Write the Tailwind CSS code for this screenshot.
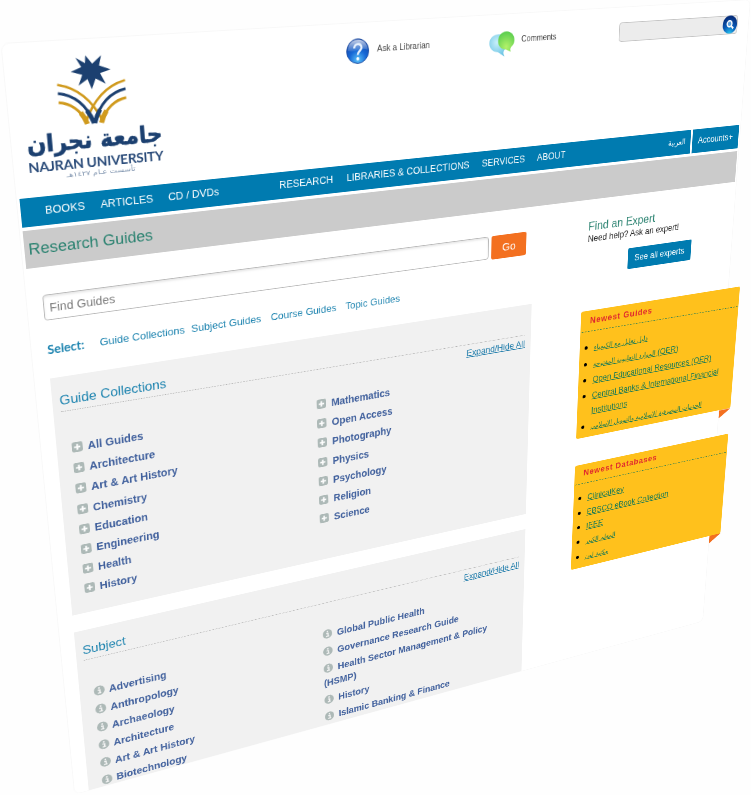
<!DOCTYPE html>
<html lang="en">
<head>
<meta charset="utf-8">
<title>Research Guides - Najran University</title>
<script src="https://cdn.jsdelivr.net/npm/@tailwindcss/browser@4"></script>
</head>
<body class="bg-[#fefefe] font-['Liberation_Sans',Arial,sans-serif]">
<svg class="hidden">
  <defs>
    <symbol id="plus" viewBox="0 0 14 14"><rect width="14" height="14" rx="2.6" fill="#adb9b7"/><path d="M7 3v8M3 7h8" stroke="#fff" stroke-width="2.3"/></symbol>
    <symbol id="info" viewBox="0 0 14 14"><circle cx="7" cy="7" r="7" fill="#adb9b7"/><path d="M5 6.300h2.800v4.300M4.800 10.700h4.600" stroke="#f4f4f4" stroke-width="1.800" fill="none"/><rect x="5.800" y="2.300" width="2.300" height="2.200" fill="#f4f4f4"/></symbol>
  </defs>
</svg>
<div class="w-[751px] h-[795px] overflow-hidden">
<div class="w-[1000px] h-[960px] bg-white rounded-[8px] outline outline-1 outline-[#f8f8f8] origin-top-left [clip-path:inset(-1px_-40px_-1px_-1px)] [transform:matrix3d(0.94881,-0.044,0,0.00026708,0.093206,0.957448,0,0.00022192,0,0,1,0,1.5,44,0,1)] whitespace-nowrap">
 <div class="h-[960px] [clip-path:inset(0_-40px_0_0)]">
  <header class="flex h-[170px] items-start text-[10.7px] leading-[16px] text-[#444]">
    <svg class="w-[200px] h-[170px] shrink-0" viewBox="0 0 200 170">
      <path fill="#1c4070" d="M89 17.500L96 27L106.500 18.500L103.500 29.500L116 34.500L104 38L109.500 50L98.500 43.500L93.500 55L89.500 43.500L79 50L84 38.500L71.500 34.500L83.500 30L78 19.500L88 26Z"/>
      <g fill="none" stroke-linecap="butt">
        <path stroke="#d09a1d" stroke-width="2.800" d="M55.500 47.500C76 52 92 65 103 91M55.500 67C70 69 79 78 85 91M131.500 47.500C111 52 95 65 84 91M131.500 67C117 69 108 78 102 91"/>
        <path stroke="#d09a1d" stroke-width="5.500" d="M79 80C82 84 84 88 85.500 93M108 80C105 84 103 88 101.500 93"/>
        <path stroke="#1c4070" stroke-width="3" d="M55.500 57C74 60 86 72 93 92M131.500 57C113 60 101 72 94 92"/>
        <path stroke="#1c4070" stroke-width="4.800" d="M86 78C89.500 83 91.500 87 93 93M101 78C97.500 83 95.500 87 94 93"/>
      </g>
      <text x="93.500" y="120.500" text-anchor="middle" direction="rtl" textLength="154" lengthAdjust="spacingAndGlyphs" font-family="DejaVu Sans" font-weight="700" font-size="27" fill="#1c4070" stroke="#1c4070" stroke-width=".6">جامعة نجران</text>
      <text x="16" y="142" textLength="154.500" lengthAdjust="spacing" font-family="Lato, sans-serif" font-weight="700" font-size="15.800" fill="#2b4c7a">NAJRAN UNIVERSITY</text>
      <text x="97" y="151" text-anchor="middle" direction="rtl" textLength="79" lengthAdjust="spacingAndGlyphs" font-family="DejaVu Sans" font-size="7.500" fill="#7d92ad">تأسست عـام ١٤٢٧هـ</text>
    </svg>
    <svg class="w-[30px] h-[30px] mt-[18px] ml-[202px] shrink-0" viewBox="0 0 30 30">
      <defs><radialGradient id="ball" cx=".5" cy=".85" r=".85"><stop offset="0" stop-color="#58c0f8"/><stop offset=".45" stop-color="#1668d6"/><stop offset="1" stop-color="#123fa0"/></radialGradient><linearGradient id="shine" x1="0" y1="0" x2="0" y2="1"><stop offset="0" stop-color="#fff" stop-opacity=".75"/><stop offset="1" stop-color="#fff" stop-opacity=".1"/></linearGradient></defs>
      <circle cx="15" cy="15" r="14.500" fill="url(#ball)" stroke="#2754a5"/>
      <path fill="url(#shine)" d="M2 14C2 6 8 1.500 15 1.500S28 6 28 14C20 10 12 17 2 14Z"/>
      <path d="M10.500 11.500C10.500 5 20 5 20 11C20 15 15 14.500 15 19.500" fill="none" stroke="#e6f0fd" stroke-width="2.800"/><circle cx="15" cy="24" r="1.900" fill="#fff"/>
    </svg>
    <span class="mt-[22.500px] ml-[10.500px] w-[154px]">Ask a Librarian</span>
    <svg class="w-[36px] h-[32px] mt-[20.500px] shrink-0" viewBox="0 0 36 32">
      <defs><radialGradient id="gr" cx=".5" cy=".75" r=".7"><stop offset="0" stop-color="#b4f26a"/><stop offset="1" stop-color="#5fcf50"/></radialGradient><radialGradient id="bl" cx=".4" cy=".35" r=".75"><stop offset="0" stop-color="#c9f0fb"/><stop offset="1" stop-color="#5dbde0"/></radialGradient></defs>
      <path fill="url(#bl)" d="M13 3C5 3 0 7.500 0 13.500C0 19.500 5 24.500 12 25C15 26 18 29 22 31C20 28 20 26 21 23.500C25 21 27 18 27 14C27 8 21 3 13 3Z"/>
      <path fill="url(#gr)" d="M24 0C17 0 12.500 5 12.500 11.500C12.500 17.500 17 21.500 22 22C25 22.500 28 24 31 25.500C30 23.500 30 22 31 20C34 18 36 15 36 11.500C36 5 31 0 24 0Z"/>
    </svg>
    <span class="mt-[22.500px] ml-[10.500px] w-[147px]">Comments</span>
    <div class="mt-[19px] w-[192px] h-[25px] rounded-[4px] border border-[#c4c4c4] bg-[#ececec] flex justify-end items-center">
      <svg class="w-[24px] h-[24px] relative -top-px" viewBox="0 0 24 24"><defs><radialGradient id="sb" cx=".5" cy="1" r=".9"><stop offset="0" stop-color="#25c4f0"/><stop offset=".5" stop-color="#0a5cb8"/><stop offset="1" stop-color="#062e7c"/></radialGradient></defs><circle cx="12" cy="12" r="12" fill="url(#sb)"/><circle cx="11.500" cy="11" r="4" fill="#5fa0dd" stroke="#fff" stroke-width="2.200"/><path d="M14.500 14l3.500 3.500" stroke="#fff" stroke-width="2.600"/></svg>
    </div>
  </header>

  <nav class="ml-[3px] w-[994.500px] h-[33px] flex text-[12.700px] leading-[32px] text-white">
    <div class="w-[912.500px] bg-[#007bb0] flex gap-[18px] pl-[27px]">
      <span>BOOKS</span><span>ARTICLES</span><span>CD / DVDs</span><span class="ml-[58px]">RESEARCH</span><span>LIBRARIES &amp; COLLECTIONS</span><span>SERVICES</span><span>ABOUT</span>
      <span class="ml-auto mr-[8px] text-[10.500px] leading-[31px] font-['DejaVu_Sans',sans-serif]" dir="rtl">العربية</span>
    </div>
    <div class="ml-[3.500px] flex-1 bg-[#007bb0] pl-[9.500px]">Accounts+</div>
  </nav>
  <div class="ml-[3px] mt-[4.300px] w-[994.500px] h-[43.700px] bg-[#cbcbcb] pl-[4.500px] text-[18.660px] leading-[44px] text-[#2a8270]">Research Guides</div>

  <div class="flex">
    <main class="ml-[18px] w-[650.500px] shrink-0">
      <div class="mt-[33px] flex gap-[4.500px] items-center">
        <div class="w-[582.500px] h-[31px] rounded-[4px] border border-[#b9b9b9] bg-white pl-[6px] text-[14.200px] leading-[31px] text-[#7d7d7d] shadow-[inset_0_2px_3px_rgba(0,0,0,0.1)]">Find Guides</div>
        <div class="w-[53px] h-[32px] rounded-[3px] bg-[#f37020] text-center text-[15.500px] leading-[33px] text-white">Go</div>
      </div>
      <div class="mt-[24.800px] h-[20px] flex text-[13.260px] leading-[20px] text-[#1c83af]">
        <b class="w-[61.500px] text-[14.500px] font-['Lato',sans-serif]">Select:</b><span class="w-[112px]">Guide Collections</span><span class="w-[102.500px]">Subject Guides</span><span class="w-[100.700px]">Course Guides</span><span>Topic Guides</span>
      </div>

      <section class="mt-[25.700px] h-[315px] bg-[#f1f1f1] pt-[16.500px] pl-[8.500px] pr-[9.500px]">
        <h2 class="h-[27px] border-b border-dotted border-[#b4b4b4] text-[16.570px] leading-[25px] text-[#1c83af]">Guide Collections</h2>
        <div class="h-[24px] text-right text-[12.800px] leading-[24px] text-[#1878a8] underline -mr-px">Expand/Hide All</div>
        <div class="mt-[13px] flex pl-[9px] text-[13.840px] leading-[22.600px] font-bold text-[#3f5f9c]">
          <ul class="w-[316.500px] flex flex-col gap-[4.600px]">
            <li><svg class="inline-block w-[13px] h-[13px] mr-[6.500px] align-[-1px]"><use href="#plus"/></svg>All Guides</li>
            <li><svg class="inline-block w-[13px] h-[13px] mr-[6.500px] align-[-1px]"><use href="#plus"/></svg>Architecture</li>
            <li><svg class="inline-block w-[13px] h-[13px] mr-[6.500px] align-[-1px]"><use href="#plus"/></svg>Art &amp; Art History</li>
            <li><svg class="inline-block w-[13px] h-[13px] mr-[6.500px] align-[-1px]"><use href="#plus"/></svg>Chemistry</li>
            <li><svg class="inline-block w-[13px] h-[13px] mr-[6.500px] align-[-1px]"><use href="#plus"/></svg>Education</li>
            <li><svg class="inline-block w-[13px] h-[13px] mr-[6.500px] align-[-1px]"><use href="#plus"/></svg>Engineering</li>
            <li><svg class="inline-block w-[13px] h-[13px] mr-[6.500px] align-[-1px]"><use href="#plus"/></svg>Health</li>
            <li><svg class="inline-block w-[13px] h-[13px] mr-[6.500px] align-[-1px]"><use href="#plus"/></svg>History</li>
          </ul>
          <ul class="flex flex-col gap-[4.600px]">
            <li><svg class="inline-block w-[13px] h-[13px] mr-[7.500px] align-[-1px]"><use href="#plus"/></svg>Mathematics</li>
            <li><svg class="inline-block w-[13px] h-[13px] mr-[7.500px] align-[-1px]"><use href="#plus"/></svg>Open Access</li>
            <li><svg class="inline-block w-[13px] h-[13px] mr-[7.500px] align-[-1px]"><use href="#plus"/></svg>Photography</li>
            <li><svg class="inline-block w-[13px] h-[13px] mr-[7.500px] align-[-1px]"><use href="#plus"/></svg>Physics</li>
            <li><svg class="inline-block w-[13px] h-[13px] mr-[7.500px] align-[-1px]"><use href="#plus"/></svg>Psychology</li>
            <li><svg class="inline-block w-[13px] h-[13px] mr-[7.500px] align-[-1px]"><use href="#plus"/></svg>Religion</li>
            <li><svg class="inline-block w-[13px] h-[13px] mr-[7.500px] align-[-1px]"><use href="#plus"/></svg>Science</li>
          </ul>
        </div>
      </section>

      <section class="mt-[23.300px] h-[240px] bg-[#f1f1f1] pt-[16.500px] pl-[8.500px] pr-[9.500px]">
        <h2 class="h-[27px] border-b border-dotted border-[#b4b4b4] text-[16.570px] leading-[25px] text-[#1c83af]">Subject</h2>
        <div class="h-[24px] text-right text-[12.800px] leading-[24px] text-[#1878a8] underline -mr-px">Expand/Hide All</div>
        <div class="mt-[13.700px] flex pl-[9px] text-[13.840px] leading-[22.600px] font-bold text-[#3f5f9c]">
          <ul class="w-[316.500px] flex flex-col gap-[4.300px]">
            <li><svg class="inline-block w-[14px] h-[14px] mr-[6px] align-[-1.500px]"><use href="#info"/></svg>Advertising</li>
            <li><svg class="inline-block w-[14px] h-[14px] mr-[6px] align-[-1.500px]"><use href="#info"/></svg>Anthropology</li>
            <li><svg class="inline-block w-[14px] h-[14px] mr-[6px] align-[-1.500px]"><use href="#info"/></svg>Archaeology</li>
            <li><svg class="inline-block w-[14px] h-[14px] mr-[6px] align-[-1.500px]"><use href="#info"/></svg>Architecture</li>
            <li><svg class="inline-block w-[14px] h-[14px] mr-[6px] align-[-1.500px]"><use href="#info"/></svg>Art &amp; Art History</li>
            <li><svg class="inline-block w-[14px] h-[14px] mr-[6px] align-[-1.500px]"><use href="#info"/></svg>Biotechnology</li>
          </ul>
          <ul class="flex flex-col gap-[4.300px]">
            <li><svg class="inline-block w-[14px] h-[14px] mr-[7px] align-[-1.500px]"><use href="#info"/></svg>Global Public Health</li>
            <li><svg class="inline-block w-[14px] h-[14px] mr-[7px] align-[-1.500px]"><use href="#info"/></svg>Governance Research Guide</li>
            <li><svg class="inline-block w-[14px] h-[14px] mr-[7px] align-[-1.500px]"><use href="#info"/></svg>Health Sector Management &amp; Policy<br>(HSMP)</li>
            <li><svg class="inline-block w-[14px] h-[14px] mr-[7px] align-[-1.500px]"><use href="#info"/></svg>History</li>
            <li><svg class="inline-block w-[14px] h-[14px] mr-[7px] align-[-1.500px]"><use href="#info"/></svg>Islamic Banking &amp; Finance</li>
          </ul>
        </div>
      </section>
    </main>

    <aside class="ml-[80px] w-[273.500px] shrink-0">
      <div class="pl-[6.500px] pt-[30px] h-[158px] text-[12.850px] leading-[17px] text-[#222]">
        <h3 class="text-[16.800px] leading-[16px] text-[#2a8270]">Find an Expert</h3>
        <p>Need help? Ask an expert!</p>
        <div class="mt-[13px] ml-[66.500px] w-[107.500px] h-[30px] rounded-[2px] bg-[#007bb0] text-center text-[12.800px] leading-[30px] text-white">See all experts</div>
      </div>
      <section class="relative h-[191.500px] rounded-[3px] bg-[#ffc11c]">
        <h4 class="h-[31px] mx-[2px] pl-[13.500px] border-b border-dashed border-[#3f8550] text-[12.800px] leading-[29px] tracking-[1px] font-bold text-[#e0262e]">Newest Guides</h4>
        <ul class="pt-[11.800px] pl-[24px] text-[12.840px] leading-[22.750px] text-[#1b7a55] list-disc marker:text-black marker:text-[15px]">
          <li><span class="underline font-['DejaVu_Sans',sans-serif] text-[10px]">دليل تعليل مع الكيمياء</span></li>
          <li><span class="underline"><span class="font-['DejaVu_Sans',sans-serif] text-[10px]">الموارد التعليمية المفتوحة</span> (OER)</span></li>
          <li><span class="underline">Open Educational Resources (OER)</span></li>
          <li><span class="underline">Central Banks &amp; International Financial<br>Institutions</span></li>
          <li><span class="underline font-['DejaVu_Sans',sans-serif] text-[10px]">الخدمات المصرفية الإسلامية والتمويل الإسلامي</span></li>
        </ul>
        <div class="absolute right-0 top-full w-[21px] h-[13px] bg-[#f37020] [clip-path:polygon(0_0,100%_0,0_100%)]"></div>
      </section>
      <section class="relative mt-[41.500px] h-[168px] rounded-[3px] bg-[#ffc11c]">
        <h4 class="h-[31px] mx-[2px] pl-[13.500px] border-b border-dashed border-[#3f8550] text-[12.800px] leading-[28px] tracking-[1px] font-bold text-[#e0262e]">Newest Databases</h4>
        <ul class="pt-[10.800px] pl-[24px] text-[12.840px] leading-[22.750px] text-[#1b7a55] list-disc marker:text-black marker:text-[15px]">
          <li><span class="underline">ClinicalKey</span></li>
          <li><span class="underline">EBSCO eBook Collection</span></li>
          <li><span class="underline">IEEE</span></li>
          <li><span class="underline font-['DejaVu_Sans',sans-serif] text-[10px]">المعلم الكبير</span></li>
          <li><span class="underline font-['DejaVu_Sans',sans-serif] text-[10px]">مكتبة لون</span></li>
        </ul>
        <div class="absolute right-0 top-full w-[21px] h-[13px] bg-[#f37020] [clip-path:polygon(0_0,100%_0,0_100%)]"></div>
      </section>
    </aside>
  </div>
 </div>
</div>
</div>
</body>
</html>
